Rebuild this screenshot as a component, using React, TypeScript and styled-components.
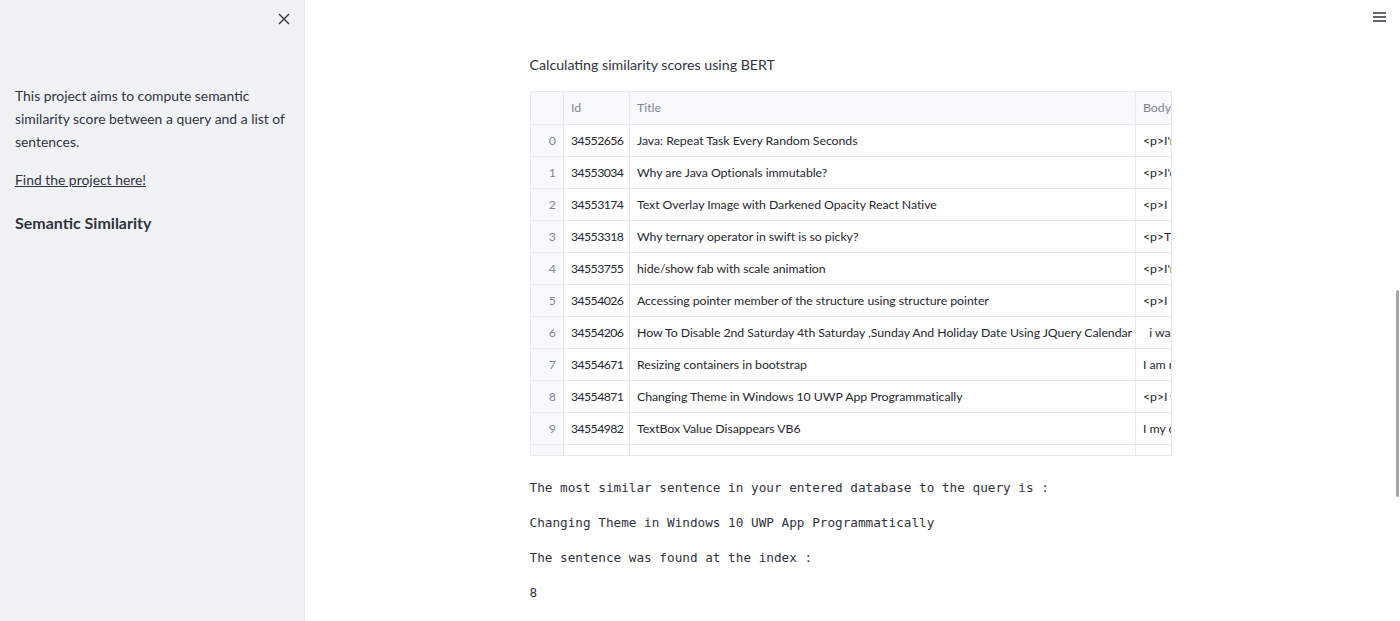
import React from "react";
import styled, { createGlobalStyle } from "styled-components";

const Global = createGlobalStyle`
  html, body { margin: 0; padding: 0; height: 100%; overflow: hidden; background: #ffffff; }
  #root { height: 100%; }
  * { box-sizing: border-box; }
`;

const Shell = styled.div`
  display: flex;
  height: 621px;
  font-family: Lato, "Open Sans", sans-serif;
  color: #31333f;
`;

const Sidebar = styled.aside`
  width: 305px;
  flex: 0 0 305px;
  background: #f0f2f6;
  border-right: 1px solid #e8eaef;
  display: flex;
  flex-direction: column;
  padding: 0 15px;
`;

const SidebarTop = styled.div`
  display: flex;
  justify-content: flex-end;
  height: 84px;
  padding-top: 11px;
  margin-right: -3px;
`;

const IconButton = styled.button`
  background: none;
  border: none;
  padding: 0;
  width: 16px;
  height: 16px;
  display: flex;
  align-items: center;
  justify-content: center;
  cursor: pointer;
  color: #31333f;
`;

const SideText = styled.p`
  margin: 0 0 14px;
  font-size: 13.9px;
  line-height: 23px;
  color: #31333f;
`;

const SideLink = styled.a`
  color: #31333f;
  text-decoration: underline;
  font-size: 13.9px;
  line-height: 23px;
  margin-bottom: 21px;
  margin-top: 1px;
`;

const SideHeading = styled.h3`
  margin: 0;
  font-size: 16px;
  font-weight: 700;
  line-height: 22px;
  color: #31333f;
`;

const Main = styled.main`
  flex: 1;
  position: relative;
  display: flex;
  justify-content: center;
  padding-top: 55px;
`;

const Content = styled.div`
  width: 642px;
  margin-left: -4px;
  display: flex;
  flex-direction: column;
`;

const Caption = styled.p`
  margin: 0 0 16px;
  font-size: 14.2px;
  line-height: 20px;
  color: #31333f;
`;

const TableFrame = styled.div`
  height: 365px;
  overflow: hidden;
  border: 1px solid #e6e9ef;
  margin-bottom: 22px;
`;

const Table = styled.table`
  border-collapse: collapse;
  table-layout: fixed;
  width: 700px;
  font-size: 12.3px;
`;

const HeadCell = styled.th<{ $w: number }>`
  width: ${(p) => p.$w}px;
  height: 32px;
  background: #f8f9fb;
  color: #808495;
  font-weight: 400;
  text-align: left;
  padding: 0 7px;
  border-right: 1px solid #e6e9ef;
  border-bottom: 1px solid #e6e9ef;
  white-space: nowrap;
  overflow: hidden;
`;

const IndexCell = styled.td`
  height: 32px;
  background: #f8f9fb;
  color: #808495;
  text-align: right;
  padding: 0 7px;
  border-right: 1px solid #e6e9ef;
  border-bottom: 1px solid #e6e9ef;
`;

const Cell = styled.td<{ $num?: boolean }>`
  height: 32px;
  padding: 0 7px;
  color: #262730;
  white-space: pre;
  overflow: hidden;
  letter-spacing: ${(p) => (p.$num ? "-0.6px" : "-0.05px")};
  border-right: 1px solid #e6e9ef;
  border-bottom: 1px solid #e6e9ef;
`;

const Mono = styled.p`
  margin: 0 0 16px;
  font-family: "DejaVu Sans Mono", "Liberation Mono", monospace;
  font-size: 12.7px;
  line-height: 19px;
  color: #31333f;
  white-space: pre;
`;

const MenuButton = styled.button`
  position: absolute;
  top: 10px;
  right: 12px;
  background: none;
  border: none;
  padding: 0;
  width: 18px;
  height: 16px;
  cursor: pointer;
  color: #31333f;
`;

const ScrollThumb = styled.div`
  position: absolute;
  right: 1px;
  top: 290px;
  width: 3px;
  height: 207px;
  border-radius: 2px;
  background: #a6a6a6;
`;

const rows: [string, string, string][] = [
  ["34552656", "Java: Repeat Task Every Random Seconds", "<p>I'm"],
  ["34553034", "Why are Java Optionals immutable?", "<p>I'd"],
  ["34553174", "Text Overlay Image with Darkened Opacity React Native", "<p>I am"],
  ["34553318", "Why ternary operator in swift is so picky?", "<p>The"],
  ["34553755", "hide/show fab with scale animation", "<p>I'm"],
  ["34554026", "Accessing pointer member of the structure using structure pointer", "<p>I have"],
  ["34554206", "How To Disable 2nd Saturday 4th Saturday ,Sunday And Holiday Date Using JQuery Calendar", "  i want"],
  ["34554671", "Resizing containers in bootstrap", "I am new"],
  ["34554871", "Changing Theme in Windows 10 UWP App Programmatically", "<p>I was"],
  ["34554982", "TextBox Value Disappears VB6", "I my code"],
  ["34555135", "Multiple Images Uploaded in Laravel with jQuery Validation", "<p>I have"],
];

export default function App() {
  return (
    <>
      <Global />
      <Shell>
        <Sidebar>
          <SidebarTop>
            <IconButton aria-label="Close sidebar">
              <svg width="12" height="12" viewBox="0 0 12 12">
                <path d="M1 1 L11 11 M11 1 L1 11" stroke="#31333f" strokeWidth="1.4" fill="none" />
              </svg>
            </IconButton>
          </SidebarTop>
          <SideText>
            This project aims to compute semantic similarity score between a query and a list of
            sentences.
          </SideText>
          <SideLink href="#">Find the project here!</SideLink>
          <SideHeading>Semantic Similarity</SideHeading>
        </Sidebar>
        <Main>
          <MenuButton aria-label="Menu">
            <svg width="15" height="12" viewBox="0 0 15 12">
              <path d="M1 2 H14 M1 6 H14 M1 10 H14" stroke="#31333f" strokeWidth="1.4" fill="none" />
            </svg>
          </MenuButton>
          <Content>
            <Caption>Calculating similarity scores using BERT</Caption>
            <TableFrame>
              <Table>
                <thead>
                  <tr>
                    <HeadCell $w={33}></HeadCell>
                    <HeadCell $w={66}>Id</HeadCell>
                    <HeadCell $w={506}>Title</HeadCell>
                    <HeadCell $w={95}>Body</HeadCell>
                  </tr>
                </thead>
                <tbody>
                  {rows.map((r, i) => (
                    <tr key={r[0]}>
                      <IndexCell>{i}</IndexCell>
                      <Cell $num>{r[0]}</Cell>
                      <Cell>{r[1]}</Cell>
                      <Cell>{r[2]}</Cell>
                    </tr>
                  ))}
                </tbody>
              </Table>
            </TableFrame>
            <Mono>The most similar sentence in your entered database to the query is :</Mono>
            <Mono>Changing Theme in Windows 10 UWP App Programmatically</Mono>
            <Mono>The sentence was found at the index :</Mono>
            <Mono>8</Mono>
          </Content>
          <ScrollThumb />
        </Main>
      </Shell>
    </>
  );
}
